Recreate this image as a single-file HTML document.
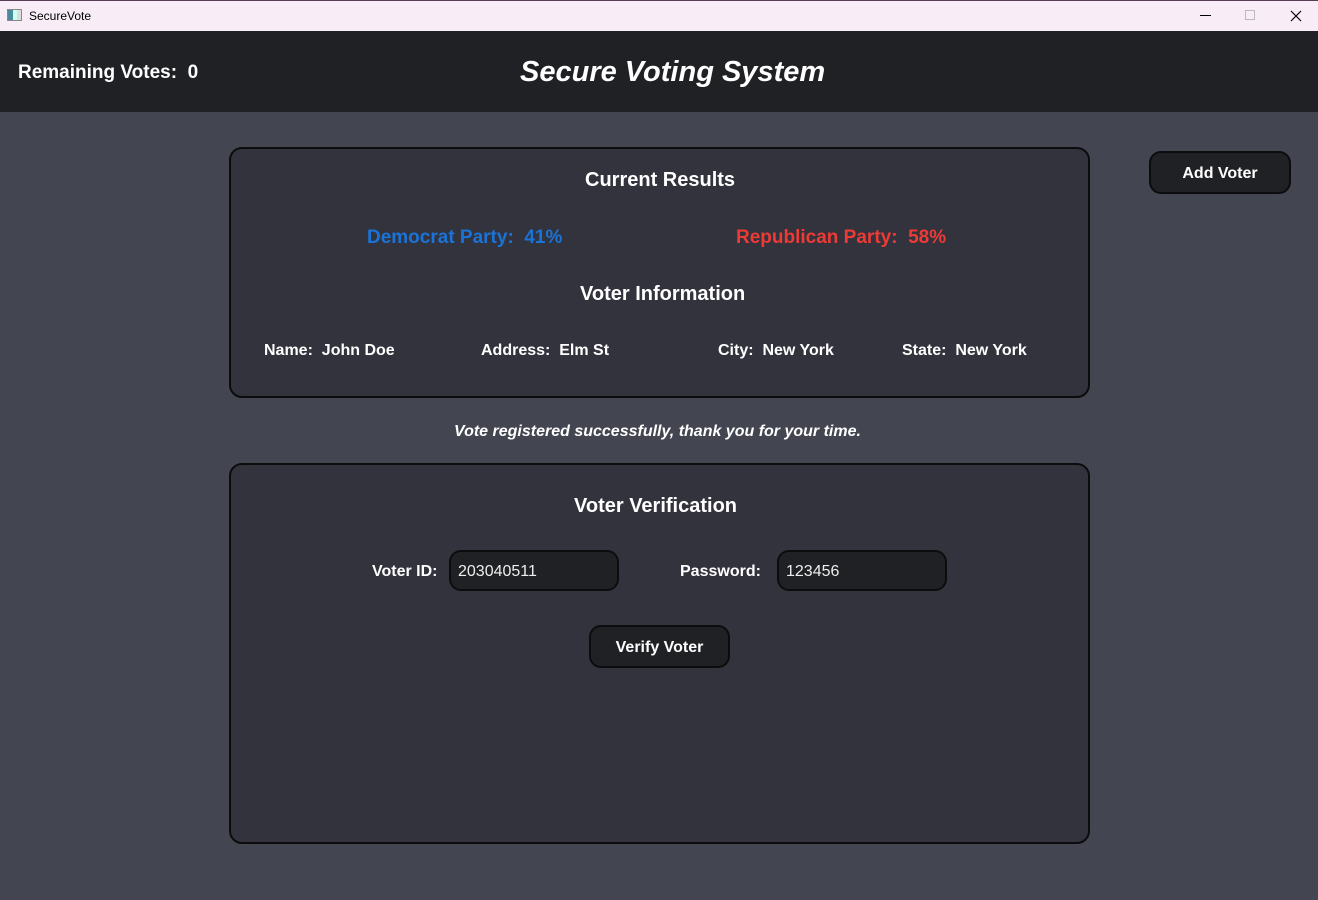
<!DOCTYPE html>
<html><head><meta charset="utf-8"><style>
*{margin:0;padding:0;box-sizing:border-box}
body{width:1318px;height:900px;overflow:hidden;background:#434550;font-family:"Liberation Sans",Arial,sans-serif;position:relative;color:#fff}
.tb{position:absolute;left:0;top:0;width:1318px;height:31px;background:#f8edf6;color:#000;border-top:1px solid #5a3d55}
.tb .t{position:absolute;left:29px;top:8px;font-size:12px}
.tb .ic{position:absolute;left:7px;top:8px;width:15px;height:12px;border:1px solid #888;background:linear-gradient(90deg,#4a8a9a 0 40%,#cfe 40% 70%,#ddd 70%)}
.hd{position:absolute;left:0;top:31px;width:1318px;height:81px;background:#202124}
.abs{position:absolute;white-space:nowrap}
.b{font-weight:bold}
.panel{position:absolute;background:#33333d;border:2px solid #0c0c0e;border-radius:13px}
.btn{position:absolute;background:#202124;border:2px solid #0c0c0e;border-radius:12px;font-weight:bold;font-size:16px;text-align:center}
.inp{position:absolute;background:#202124;border:2px solid #0c0c0e;border-radius:12px;font-size:16px;padding:11px 0 0 7px;color:#eee}
</style></head><body>
<div class="tb"><div class="ic"></div><div class="t">SecureVote</div>
<div class="abs" style="left:1200px;top:14px;width:11px;height:1px;background:#000"></div>
<div class="abs" style="left:1245px;top:9px;width:10px;height:10px;border:1px solid #bbb"></div>
<svg class="abs" style="left:1290px;top:9px" width="12" height="12"><path d="M1 1L11 11M11 1L1 11" stroke="#000" stroke-width="1.2"/></svg>
</div>
<div class="hd"></div>
<div class="abs b" style="left:18px;top:62px;font-size:19px">Remaining Votes:&nbsp; 0</div>
<div class="abs b" style="left:520px;top:56px;font-size:29px;font-style:italic">Secure Voting System</div>
<div class="btn" style="left:1149px;top:151px;width:142px;height:43px;line-height:41px">Add Voter</div>
<div class="panel" style="left:229px;top:147px;width:861px;height:251px"></div>
<div class="abs b" style="left:585px;top:169px;font-size:20px">Current Results</div>
<div class="abs b" style="left:367px;top:227px;font-size:19px;color:#1a73d6">Democrat Party:&nbsp; 41%</div>
<div class="abs b" style="left:736px;top:227px;font-size:19px;color:#ee3a35">Republican Party:&nbsp; 58%</div>
<div class="abs b" style="left:580px;top:283px;font-size:20px">Voter Information</div>
<div class="abs b" style="left:264px;top:342px;font-size:16px">Name:&nbsp; John Doe</div>
<div class="abs b" style="left:481px;top:342px;font-size:16px">Address:&nbsp; Elm St</div>
<div class="abs b" style="left:718px;top:342px;font-size:16px">City:&nbsp; New York</div>
<div class="abs b" style="left:902px;top:342px;font-size:16px">State:&nbsp; New York</div>
<div class="abs b" style="left:454px;top:423px;font-size:16px;font-style:italic">Vote registered successfully, thank you for your time.</div>
<div class="panel" style="left:229px;top:463px;width:861px;height:381px"></div>
<div class="abs b" style="left:574px;top:495px;font-size:20px">Voter Verification</div>
<div class="abs b" style="left:372px;top:563px;font-size:16px">Voter ID:</div>
<div class="inp" style="left:449px;top:550px;width:170px;height:41px">203040511</div>
<div class="abs b" style="left:680px;top:563px;font-size:16px">Password:</div>
<div class="inp" style="left:777px;top:550px;width:170px;height:41px">123456</div>
<div class="btn" style="left:589px;top:625px;width:141px;height:43px;line-height:41px">Verify Voter</div>
</body></html>
